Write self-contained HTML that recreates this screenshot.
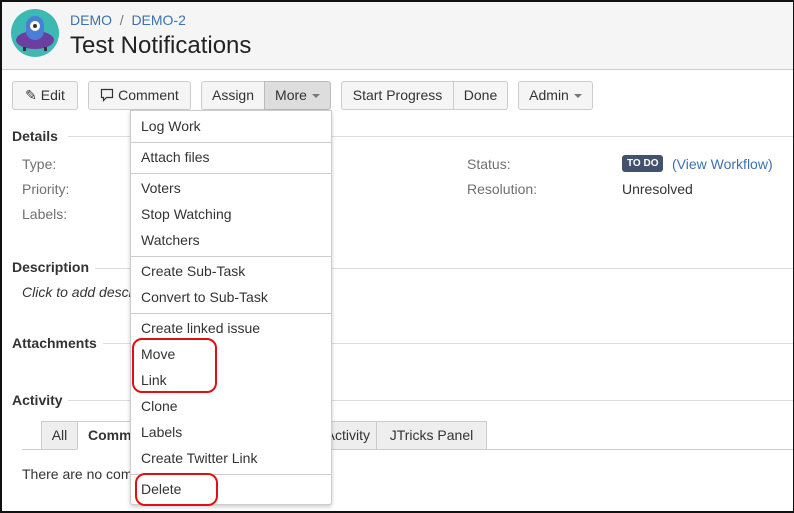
<!DOCTYPE html>
<html><head><style>
*{box-sizing:border-box;margin:0;padding:0}
body{width:794px;height:513px;position:relative;overflow:hidden;background:#fff;font-family:"Liberation Sans",sans-serif;font-size:14px;color:#333}
.frame{position:absolute;left:0;top:0;width:794px;height:513px;border:2px solid #111;border-right-width:1px;z-index:20;pointer-events:none}
.hdr{position:absolute;left:0;top:0;width:794px;height:70px;background:#f5f5f5;border-bottom:1px solid #ccc}
.a{position:absolute;white-space:nowrap}
.btn{position:absolute;top:81px;height:29px;border:1px solid #ccc;background:#f5f5f5;border-radius:3px;line-height:27px;text-align:center;color:#333;font-size:14px}
.sec{position:absolute;left:12px;font-weight:bold;font-size:14px;color:#333}
.line{position:absolute;height:1px;background:#ddd}
.lbl{position:absolute;color:#707070;font-size:14px}
.menu{position:absolute;left:130px;top:110px;width:202px;height:395px;background:#fff;border:1px solid #ccc;border-radius:0 0 3px 3px;box-shadow:0 2px 4px rgba(0,0,0,.2);z-index:5}
.mi{position:absolute;left:10px;font-size:14px;color:#333}
.sep{position:absolute;left:0;width:200px;height:1px;background:#ccc}
.red{position:absolute;border:2px solid #e01010;border-radius:10px;z-index:6}
.tab{position:absolute;top:421px;height:29px;border:1px solid #ccc;background:#eee;line-height:27px;text-align:center;font-size:14px}
.caret{display:inline-block;width:0;height:0;border-left:4px solid transparent;border-right:4px solid transparent;border-top:4px solid #777;vertical-align:middle;margin-left:5px}
</style></head><body>
<div class="hdr"></div>
<svg class="a" style="left:11px;top:9px" width="48" height="48" viewBox="0 0 48 48">
<circle cx="24" cy="24" r="24" fill="#3cb9b2"/>
<ellipse cx="24" cy="31" rx="19" ry="9" fill="#6a3fa0"/>
<rect x="15" y="7" width="18" height="24" rx="9" fill="#4a7fd6"/>
<circle cx="24" cy="17" r="5" fill="#fff"/><circle cx="24" cy="17" r="2" fill="#333"/>
<rect x="12" y="38" width="3" height="4" fill="#333"/><rect x="33" y="38" width="3" height="4" fill="#333"/>
</svg>
<div class="a" style="left:70px;top:12px;color:#3b73af;font-size:14px">DEMO&nbsp;&nbsp;<span style="color:#777">/</span>&nbsp;&nbsp;DEMO-2</div>
<div class="a" style="left:70px;top:32px;font-size:24px;color:#222">Test Notifications</div>

<div class="btn" style="left:12px;width:66px">✎ Edit</div>
<div class="btn" style="left:88px;width:103px"><svg width="14" height="14" viewBox="0 0 14 14" style="vertical-align:-2px"><path d="M1.5 1.5h11v8h-6l-3 3v-3h-2z" fill="none" stroke="#333" stroke-width="1.2"/></svg> Comment</div>
<div class="btn" style="left:201px;width:64px;border-radius:3px 0 0 3px">Assign</div>
<div class="btn" style="left:264px;width:67px;background:#ddd;border-color:#bbb;border-radius:0 3px 3px 0">More<span class="caret"></span></div>
<div class="btn" style="left:341px;width:113px;border-radius:3px 0 0 3px">Start Progress</div>
<div class="btn" style="left:453px;width:55px;border-radius:0 3px 3px 0">Done</div>
<div class="btn" style="left:518px;width:75px">Admin<span class="caret"></span></div>

<div class="sec" style="top:128px">Details</div><div class="line" style="left:68px;right:0;top:136px"></div>
<div class="lbl" style="left:22px;top:156px">Type:</div>
<div class="lbl" style="left:22px;top:181px">Priority:</div>
<div class="lbl" style="left:22px;top:206px">Labels:</div>
<div class="lbl" style="left:467px;top:156px">Status:</div>
<div class="lbl" style="left:467px;top:181px">Resolution:</div>
<div class="a" style="left:622px;top:155px;background:#42526e;color:#fff;font-size:10px;font-weight:bold;padding:2px 5px;border-radius:3px;line-height:13px">TO DO</div>
<div class="a" style="left:672px;top:156px;color:#3b73af">(View Workflow)</div>
<div class="a" style="left:622px;top:181px;color:#333">Unresolved</div>

<div class="sec" style="top:259px">Description</div><div class="line" style="left:95px;right:0;top:268px"></div>
<div class="a" style="left:22px;top:284px;font-style:italic">Click to add description</div>
<div class="sec" style="top:335px">Attachments</div><div class="line" style="left:103px;right:0;top:343px"></div>
<div class="sec" style="top:392px">Activity</div><div class="line" style="left:68px;right:0;top:400px"></div>

<div class="line" style="left:22px;right:0;top:449px;background:#ccc"></div>
<div class="tab" style="left:41px;width:37px">All</div>
<div class="tab" style="left:77px;width:100px;background:#fff;border-bottom-color:#fff;font-weight:bold;text-align:left;padding-left:10px">Comments</div>
<div class="tab" style="left:260px;width:117px;text-align:right;padding-right:6px">History Activity</div>
<div class="tab" style="left:376px;width:111px">JTricks Panel</div>
<div class="a" style="left:22px;top:466px">There are no comments yet on this issue.</div>

<div class="menu">
<div class="mi" style="top:7px">Log Work</div>
<div class="sep" style="top:31px"></div>
<div class="mi" style="top:38px">Attach files</div>
<div class="sep" style="top:62px"></div>
<div class="mi" style="top:69px">Voters</div>
<div class="mi" style="top:95px">Stop Watching</div>
<div class="mi" style="top:121px">Watchers</div>
<div class="sep" style="top:145px"></div>
<div class="mi" style="top:152px">Create Sub-Task</div>
<div class="mi" style="top:178px">Convert to Sub-Task</div>
<div class="sep" style="top:202px"></div>
<div class="mi" style="top:209px">Create linked issue</div>
<div class="mi" style="top:235px">Move</div>
<div class="mi" style="top:261px">Link</div>
<div class="mi" style="top:287px">Clone</div>
<div class="mi" style="top:313px">Labels</div>
<div class="mi" style="top:339px">Create Twitter Link</div>
<div class="sep" style="top:363px"></div>
<div class="mi" style="top:370px">Delete</div>
</div>
<div class="red" style="left:132px;top:338px;width:85px;height:55px"></div>
<div class="red" style="left:135px;top:473px;width:83px;height:33px"></div>
<div class="frame"></div>
</body></html>
